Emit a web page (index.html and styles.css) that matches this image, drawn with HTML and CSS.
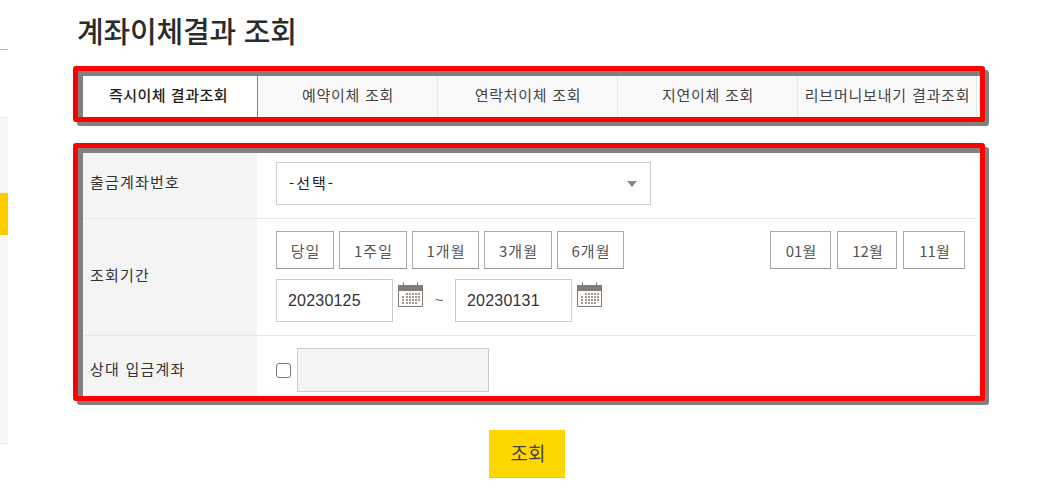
FILE: index.html
```html
<!DOCTYPE html>
<html lang="ko">
<head>
<meta charset="utf-8">
<title>계좌이체결과 조회</title>
<link rel="stylesheet" href="styles.css">
</head>
<body>
<div class="page">
  <aside class="side">
    <div class="side-line"></div>
    <div class="side-panel">
      <div class="side-item"></div>
      <div class="side-active"></div>
    </div>
  </aside>
  <main class="main">
    <h1 class="title">계좌이체결과 조회</h1>
    <section class="frame frame-tabs">
      <nav class="tabs">
        <a class="tab tab-on">즉시이체 결과조회</a>
        <a class="tab">예약이체 조회</a>
        <a class="tab">연락처이체 조회</a>
        <a class="tab">지연이체 조회</a>
        <a class="tab tab-narrow">리브머니보내기 결과조회</a>
      </nav>
    </section>
    <section class="frame frame-form">
      <div class="row row-account">
        <div class="label">출금계좌번호</div>
        <div class="cell">
          <div class="select"><span>-선택-</span><i class="caret"></i></div>
        </div>
      </div>
      <div class="row row-period">
        <div class="label">조회기간</div>
        <div class="cell cell-period">
          <div class="btn-line">
            <div class="btn-group">
              <button class="btn w58">당일</button>
              <button class="btn w68">1주일</button>
              <button class="btn w67">1개월</button>
              <button class="btn w68">3개월</button>
              <button class="btn w67">6개월</button>
            </div>
            <div class="btn-group btn-group-months">
              <button class="btn w61">01월</button>
              <button class="btn w60">12월</button>
              <button class="btn w62">11월</button>
            </div>
          </div>
          <div class="date-line">
            <div class="date">20230125</div>
            <svg class="cal" viewBox="0 0 25 25" aria-hidden="true">
              <rect x="0" y="3" width="25" height="22" fill="#857d77"/>
              <rect x="5" y="0" width="1" height="4" fill="#857d77"/>
              <rect x="19" y="0" width="1" height="4" fill="#857d77"/>
              <rect x="1" y="9" width="23" height="15" fill="#fbfbfb"/>
              <path d="M8 11h2v2H8zM11 11h2v2h-2zM14 11h2v2h-2zM17 11h2v2h-2zM20 11h2v2h-2zM4 14h2v2H4zM8 14h2v2H8zM11 14h2v2h-2zM14 14h2v2h-2zM17 14h2v2h-2zM20 14h2v2h-2zM4 17h2v2H4zM8 17h2v2H8zM11 17h2v2h-2zM14 17h2v2h-2zM17 17h2v2h-2zM20 17h2v2h-2zM4 20h2v2H4zM8 20h2v2H8zM11 20h2v2h-2zM14 20h2v2h-2zM17 20h2v2h-2z" fill="#a09a95"/>
            </svg>
            <span class="tilde">~</span>
            <div class="date">20230131</div>
            <svg class="cal" viewBox="0 0 25 25" aria-hidden="true">
              <rect x="0" y="3" width="25" height="22" fill="#857d77"/>
              <rect x="5" y="0" width="1" height="4" fill="#857d77"/>
              <rect x="19" y="0" width="1" height="4" fill="#857d77"/>
              <rect x="1" y="9" width="23" height="15" fill="#fbfbfb"/>
              <path d="M8 11h2v2H8zM11 11h2v2h-2zM14 11h2v2h-2zM17 11h2v2h-2zM20 11h2v2h-2zM4 14h2v2H4zM8 14h2v2H8zM11 14h2v2h-2zM14 14h2v2h-2zM17 14h2v2h-2zM20 14h2v2h-2zM4 17h2v2H4zM8 17h2v2H8zM11 17h2v2h-2zM14 17h2v2h-2zM17 17h2v2h-2zM20 17h2v2h-2zM4 20h2v2H4zM8 20h2v2H8zM11 20h2v2h-2zM14 20h2v2h-2zM17 20h2v2h-2z" fill="#a09a95"/>
            </svg>
          </div>
        </div>
      </div>
      <div class="row row-target">
        <div class="label">상대 입금계좌</div>
        <div class="cell cell-target">
          <span class="check"></span>
          <div class="disabled-input"></div>
        </div>
      </div>
    </section>
    <div class="actions"><button class="submit">조회</button></div>
  </main>
</div>
</body>
</html>
```

FILE: styles.css
```css
* { box-sizing: border-box; }
html, body { margin: 0; padding: 0; background: #fff; }
body {
  width: 1058px;
  height: 504px;
  overflow: hidden;
  font-family: "Noto Sans CJK KR", "Liberation Sans", sans-serif;
  color: #333;
}
.page { display: flex; align-items: flex-start; }

.side { width: 8px; flex: none; padding-top: 49px; }
.side-line { height: 1px; background: #bbb; }
.side-panel {
  margin-top: 67px;
  height: 327px;
  background: #f8f8f8;
  border-top: 1px solid #eee;
  border-bottom: 1px solid #e8e8e8;
}
.side-item { height: 75px; border-bottom: 1px solid #eee; }
.side-active { height: 42px; background: #ffcc00; }

.main { margin-left: 65px; width: 917px; }
.title {
  margin: 0 0 0 4px;
  height: 66px;
  padding-top: 7px;
  font-size: 29px;
  line-height: 46px;
  font-weight: 500;
  letter-spacing: -0.2px;
  color: #2b2b2b;
}

.frame {
  width: 912px;
  border: 5px solid #f00;
  border-radius: 3px;
  background: #fff;
  padding: 5px 3px 0 5px;
  box-shadow: 4px 4px 0 #808080, inset 5px 5px 0 #808080;
}
.frame-tabs { height: 56px; }
.frame-form { height: 258px; margin-top: 21px; }

.tabs { display: flex; width: 894px; height: 41px; }
.tab {
  width: 180px;
  flex: none;
  display: flex;
  align-items: center;
  justify-content: center;
  padding: 0 0 4px 1px;
  background: #f9f9f9;
  border-right: 1px solid #e5e5e5;
  font-size: 15px;
  letter-spacing: 0.7px;
  color: #444;
  white-space: nowrap;
}
.tab-on {
  width: 175px;
  padding: 0 3px 4px 0;
  background: #fff;
  border-right: 1px solid #8f8076;
  font-weight: 500;
  color: #222;
  letter-spacing: 0.5px;
}
.tab-narrow { width: 179px; letter-spacing: 0.8px; }

.row { display: flex; width: 893px; border-bottom: 1px solid #e6e6e6; }
.row-account { height: 66px; }
.row-period { height: 117px; }
.row-target { height: 60px; border-bottom: 0; }
.label {
  width: 174px;
  flex: none;
  display: flex;
  align-items: center;
  padding-left: 7px;
  background: #f4f4f4;
  font-size: 15px;
  letter-spacing: 1.2px;
  color: #333;
}
.row-account .label { padding-bottom: 8px; }
.row-period .label { padding-bottom: 6px; }
.row-target .label { padding-top: 4px; }
.cell { flex: 1; padding-left: 19px; }
.row-account .cell { padding-top: 9px; }

.select {
  width: 375px;
  height: 43px;
  border: 1px solid #ccc;
  background: #fff;
  display: flex;
  align-items: center;
  justify-content: space-between;
  padding: 0 13px 2px 12px;
  font-size: 15px;
  letter-spacing: 2px;
  color: #222;
}
.caret {
  width: 0;
  height: 0;
  margin-top: 2px;
  border-left: 5px solid transparent;
  border-right: 5px solid transparent;
  border-top: 6px solid #888;
}

.cell-period { padding-top: 12px; padding-right: 11px; }
.btn-line { display: flex; justify-content: space-between; }
.btn-group { display: flex; gap: 5px; }
.btn-group-months { gap: 6px; }
.btn {
  height: 38px;
  padding: 0 0 0 1px;
  border: 1px solid #aaa;
  border-bottom-color: #999;
  background: #fff;
  font-family: inherit;
  font-size: 15px;
  letter-spacing: 1px;
  color: #555;
}
.btn-group-months .btn { letter-spacing: 0; }
.w58 { width: 58px; }
.w60 { width: 60px; }
.w61 { width: 61px; }
.w62 { width: 62px; }
.w67 { width: 67px; }
.w68 { width: 68px; }

.date-line { display: flex; align-items: flex-start; margin-top: 10px; }
.date {
  width: 117px;
  height: 43px;
  border: 1px solid #ccc;
  padding-left: 11px;
  font-family: "Liberation Sans", sans-serif;
  font-size: 16px;
  letter-spacing: 0.2px;
  line-height: 41px;
  color: #333;
}
.cal { width: 25px; height: 25px; margin: 3px 0 0 5px; flex: none; }
.tilde {
  width: 32px;
  flex: none;
  text-align: center;
  font-family: "Liberation Sans", sans-serif;
  font-size: 14px;
  line-height: 42px;
  color: #666;
}

.cell-target { display: flex; align-items: center; gap: 6px; padding-top: 8px; }
.check {
  width: 15px;
  height: 15px;
  border: 1px solid #767676;
  border-radius: 3px;
  background: #fff;
}
.disabled-input {
  width: 192px;
  height: 44px;
  background: #f4f4f4;
  border: 1px solid #ccc;
}

.actions { display: flex; justify-content: center; margin-top: 29px; width: 908px; }
.submit {
  width: 76px;
  height: 48px;
  border: 0;
  border-bottom: 1px solid #f0c000;
  padding: 0 0 2px 2px;
  background: #ffd800;
  font-family: inherit;
  font-size: 19px;
  color: #444;
}
```
